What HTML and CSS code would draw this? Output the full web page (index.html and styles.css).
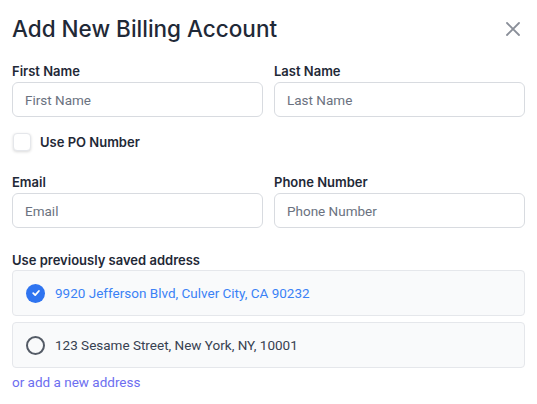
FILE: index.html
```html
<!DOCTYPE html>
<html lang="en">
<head>
    <meta charset="UTF-8">
    <meta name="viewport" content="width=device-width, initial-scale=1.0">
    <title>Add New Billing Account</title>
    <link rel="stylesheet" href="styles.css">
</head>
<body>

<div class="modal">
    <div class="modal-header">
        <h1>Add New Billing Account</h1>
        <button class="close-button" aria-label="Close">
            <svg width="16" height="16" viewBox="0 0 16 16" fill="none" stroke="currentColor" stroke-width="1.8" stroke-linecap="round">
                <path d="M2 2L14 14M14 2L2 14"/>
            </svg>
        </button>
    </div>

    <div class="row">
        <div class="field">
            <label for="firstName">First Name</label>
            <input type="text" id="firstName" placeholder="First Name">
        </div>
        <div class="field">
            <label for="lastName">Last Name</label>
            <input type="text" id="lastName" placeholder="Last Name">
        </div>
    </div>

    <label class="checkbox-row">
        <span class="checkbox"></span>
        <span>Use PO Number</span>
    </label>

    <div class="row">
        <div class="field">
            <label for="email">Email</label>
            <input type="text" id="email" placeholder="Email">
        </div>
        <div class="field">
            <label for="phone">Phone Number</label>
            <input type="text" id="phone" placeholder="Phone Number">
        </div>
    </div>

    <div class="section-label">Use previously saved address</div>
    <div class="address selected">
        <span class="radio-checked">
            <svg width="10" height="10" viewBox="0 0 10 10" fill="none" stroke="#fff" stroke-width="1.8" stroke-linecap="round" stroke-linejoin="round">
                <path d="M2.2 5.2L4.2 7.1L7.9 3"/>
            </svg>
        </span>
        <span>9920 Jefferson Blvd, Culver City, CA 90232</span>
    </div>
    <div class="address">
        <span class="radio"></span>
        <span>123 Sesame Street, New York, NY, 10001</span>
    </div>
    <a href="#" class="add-link">or add a new address</a>
</div>

</body>
</html>
```

FILE: styles.css
```css
body {
    font-family: Inter, "Noto Sans", Arial, sans-serif;
    margin: 0;
    padding: 0;
    background-color: #fff;
    color: #1f2937;
}
.modal {
    padding: 13px 12px 12px 12px;
}
.modal-header {
    display: flex;
    justify-content: space-between;
    align-items: center;
    margin-bottom: 18px;
}
h1 {
    margin: 0;
    font-size: 22.5px;
    font-weight: 500;
    line-height: 32px;
    color: #1f2937;
}
.close-button {
    background: none;
    border: none;
    padding: 0;
    margin-right: 4px;
    color: #8a8f99;
    cursor: pointer;
    display: flex;
}
.row {
    display: grid;
    grid-template-columns: 1fr 1fr;
    gap: 11px;
}
.field label {
    display: block;
    font-size: 13px;
    font-weight: 600;
    line-height: 16px;
    margin-bottom: 3px;
    color: #1f2937;
}
input[type="text"] {
    display: block;
    width: 100%;
    box-sizing: border-box;
    height: 35px;
    padding: 0 12px;
    border: 1px solid #d8dbe0;
    border-radius: 6px;
    font-family: Roboto, Inter, sans-serif;
    font-size: 13.5px;
    color: #1f2937;
}
input::placeholder {
    color: #6b7280;
}
.checkbox-row {
    display: flex;
    align-items: center;
    gap: 9px;
    margin: 16px 0 23px 1px;
    font-size: 13px;
    font-weight: 600;
    color: #1f2937;
}
.checkbox {
    width: 18px;
    height: 18px;
    box-sizing: border-box;
    border: 1px solid #e5e7eb;
    border-radius: 4px;
    background-color: #fff;
    box-shadow: 0 1px 3px rgba(0,0,0,0.15);
}
.section-label {
    margin-top: 24px;
    font-size: 13px;
    font-weight: 600;
    line-height: 16px;
    margin-bottom: 2px;
}
.address {
    display: flex;
    align-items: center;
    gap: 10px;
    height: 46px;
    box-sizing: border-box;
    padding: 0 13px;
    margin-bottom: 6px;
    background-color: #f9fafb;
    border: 1px solid #e5e7eb;
    border-radius: 4px;
    font-family: Roboto, Inter, sans-serif;
    font-size: 13.5px;
    color: #374151;
}
.address.selected {
    color: #3b82f6;
}
.radio-checked, .radio {
    width: 19px;
    height: 19px;
    box-sizing: border-box;
    border-radius: 50%;
    display: flex;
    align-items: center;
    justify-content: center;
    flex-shrink: 0;
}
.radio-checked {
    background-color: #2f74f0;
}
.radio {
    border: 2px solid #545b66;
}
.add-link {
    display: block;
    margin-top: 4px;
    font-family: Roboto, Inter, sans-serif;
    font-size: 13.5px;
    color: #6d6ef0;
    text-decoration: none;
}
```
